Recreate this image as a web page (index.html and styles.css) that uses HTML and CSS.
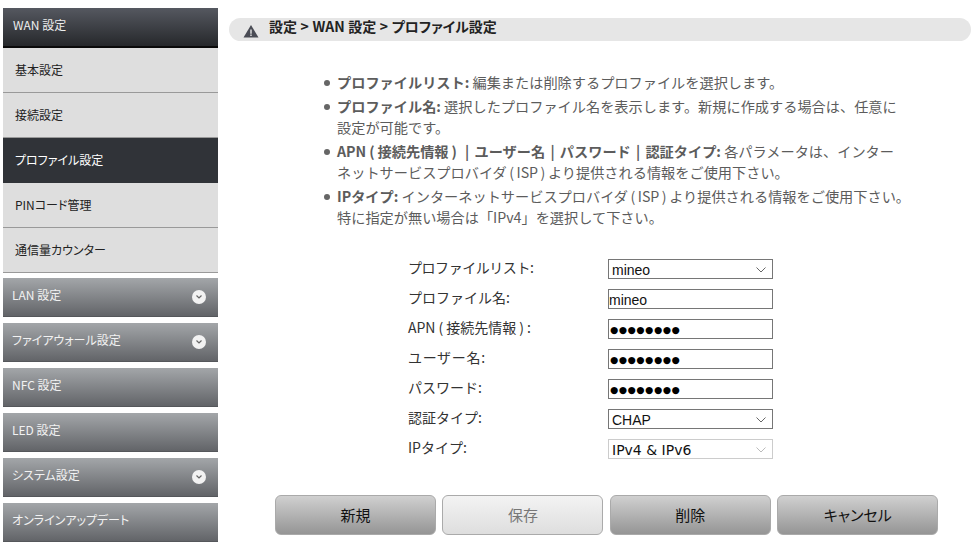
FILE: index.html
```html
<!DOCTYPE html>
<html lang="ja">
<head>
<meta charset="utf-8">
<title>プロファイル設定</title>
<link rel="stylesheet" href="styles.css">
</head>
<body>
<div class="page">
  <nav class="sidebar">
    <div class="group">
      <div class="head head-open">WAN 設定</div>
      <div class="item">基本設定</div>
      <div class="item">接続設定</div>
      <div class="item item-active">プロファイル設定</div>
      <div class="item">PINコード管理</div>
      <div class="item">通信量カウンター</div>
    </div>
    <div class="head">LAN 設定<span class="chev"><svg viewBox="0 0 8 6" width="8" height="6"><path d="M1.5 1.5 4 4l2.5-2.5" fill="none" stroke="#666" stroke-width="1.2"/></svg></span></div>
    <div class="head">ファイアウォール設定<span class="chev"><svg viewBox="0 0 8 6" width="8" height="6"><path d="M1.5 1.5 4 4l2.5-2.5" fill="none" stroke="#666" stroke-width="1.2"/></svg></span></div>
    <div class="head">NFC 設定</div>
    <div class="head">LED 設定</div>
    <div class="head">システム設定<span class="chev"><svg viewBox="0 0 8 6" width="8" height="6"><path d="M1.5 1.5 4 4l2.5-2.5" fill="none" stroke="#666" stroke-width="1.2"/></svg></span></div>
    <div class="head">オンラインアップデート</div>
  </nav>
  <main class="main">
    <div class="crumb">
      <svg class="crumb-icon" viewBox="0 0 16 14" width="16" height="14"><path d="M8 1 15.5 13.5H.5z" fill="#4a4c55"/><path d="M7.3 5.5h1.4v4.2H7.3zM7.3 10.5h1.4v1.5H7.3z" fill="#e6e6e6"/></svg>
      <span>設定 &gt; WAN 設定 &gt; プロファイル設定</span>
    </div>
    <ul class="notes">
      <li><b>プロファイルリスト:</b> 編集または削除するプロファイルを選択します。</li>
      <li><b>プロファイル名:</b> 選択したプロファイル名を表示します。新規に作成する場合は、任意に<br>設定が可能です。</li>
      <li><b class="pipes">APN<span class="paren">(</span>接続先情報<span class="paren">)</span> | ユーザー名 | パスワード | 認証タイプ:</b> 各パラメータは、インター<br>ネットサービスプロバイダ<span class="paren-isp">(</span>ISP<span class="paren-isp">)</span>より提供される情報をご使用下さい。</li>
      <li><b>IPタイプ:</b> インターネットサービスプロバイダ<span class="paren-isp">(</span>ISP<span class="paren-isp">)</span>より提供される情報をご使用下さい。<br>特に指定が無い場合は「IPv4」を選択して下さい。</li>
    </ul>
    <form class="form">
      <div class="row"><label class="label label-tight">プロファイルリスト:</label><div class="field select">mineo<svg viewBox="0 0 10 6" width="10" height="6"><path d="M.5.5 5 5 9.5.5" fill="none" stroke="#666"/></svg></div></div>
      <div class="row"><label class="label">プロファイル名:</label><div class="field text">mineo</div></div>
      <div class="row"><label class="label">APN<span class="paren">(</span>接続先情報<span class="paren">)</span>:</label><div class="field text"><span class="dots">●●●●●●●●</span></div></div>
      <div class="row"><label class="label label-wide">ユーザー名:</label><div class="field text"><span class="dots">●●●●●●●●</span></div></div>
      <div class="row"><label class="label">パスワード:</label><div class="field text"><span class="dots">●●●●●●●●</span></div></div>
      <div class="row"><label class="label">認証タイプ:</label><div class="field select">CHAP<svg viewBox="0 0 10 6" width="10" height="6"><path d="M.5.5 5 5 9.5.5" fill="none" stroke="#666"/></svg></div></div>
      <div class="row"><label class="label">IPタイプ:</label><div class="field select disabled">IPv4 &amp; IPv6<svg viewBox="0 0 10 6" width="10" height="6"><path d="M.5.5 5 5 9.5.5" fill="none" stroke="#bbb"/></svg></div></div>
    </form>
    <div class="buttons">
      <div class="btn">新規</div>
      <div class="btn btn-off">保存</div>
      <div class="btn">削除</div>
      <div class="btn">キャンセル</div>
    </div>
  </main>
</div>
</body>
</html>
```
FILE: styles.css
```css
* { box-sizing: border-box; }
html, body { margin: 0; padding: 0; background: #fff; }
body { font-family: "Noto Sans CJK JP", "Noto Sans", sans-serif; color: #333; overflow: hidden; }
.page { display: flex; width: 980px; height: 555px; padding-left: 3px; }

.sidebar { width: 215px; padding-top: 8px; display: flex; flex-direction: column; gap: 6px; flex: none; font-feature-settings: "palt"; }
.group { display: flex; flex-direction: column; margin-bottom: -1px; }
.head {
  height: 39px; padding: 0 9px 6px; display: flex; align-items: center; justify-content: space-between;
  font-size: 12px; color: #f2f2f2;
  background: linear-gradient(#a3a6a9, #626468); border-bottom: 1px solid #55575b;
}
.head-open { height: 40px; padding-left: 10px; padding-bottom: 5px; background: linear-gradient(#555860, #26282b); border-bottom: 2px solid #0a0a0a; color: #eee; }
.chev {
  width: 14px; height: 14px; border-radius: 50%; background: #f2f2f2; margin: 6px 3px 0 0;
  display: flex; align-items: center; justify-content: center;
}
.item {
  height: 45px; padding: 13px 12px 0; font-size: 12px; line-height: 18px; color: #222;
  background: #dedede; border-bottom: 1px solid #999;
}
.item-active { background: #303338; color: #fff; border-bottom: 0; }

.main { width: 742px; margin-left: 11px; padding-top: 18px; flex: none; }
.crumb {
  height: 23px; border-radius: 12px; background: #e6e6e6; display: flex; align-items: flex-start;
  padding-left: 14px; gap: 10px; font-size: 14px; font-weight: 700; color: #222; line-height: 17px; font-feature-settings: "palt"; word-spacing: .4px;
}
.crumb-icon { margin-top: 6px; }

.notes { margin: 31px 0 0; padding: 0 0 0 108px; list-style: none; font-size: 14.2px; line-height: 21px; color: #5c5c5c; width: 690px; }
.notes li { margin: 0 0 3px; white-space: nowrap; position: relative; }
.notes li::before { content: ""; position: absolute; left: -13px; top: 8px; width: 6px; height: 6px; border-radius: 50%; background: #666; }
.notes b { font-weight: 700; }
.pipes { word-spacing: 2px; }
.paren { margin: 0 3px; }
.paren-isp { margin: 0 2.5px; }

.form { margin-top: 30.5px; display: flex; flex-direction: column; gap: 10px; padding-left: 179px; }
.row { display: flex; height: 20px; align-items: center; }
.label { width: 200px; font-size: 14px; color: #333; line-height: 18px; margin-top: -4px; }
.label-tight { letter-spacing: -0.45px; }
.label-wide { letter-spacing: 0.7px; }
.field { width: 165px; height: 20px; border: 1px solid #767676; padding-top: 2px; font-size: 14px; font-family: "Liberation Sans", "Noto Sans CJK JP", sans-serif; color: #111; display: flex; align-items: center; background: #fff; }
.select { padding-left: 3px; padding-right: 3px; justify-content: space-between; }
.select svg { margin-right: 3px; }
.dots { font-family: "DejaVu Sans", sans-serif; font-size: 9.4px; letter-spacing: .6px; margin-left: 1px; color: #000; }
.disabled { border-color: #ccc; font-family: "DejaVu Sans", sans-serif; font-size: 14px; }

.buttons { display: flex; gap: 6.4px; margin-top: 36px; padding-left: 46px; }
.btn {
  width: 161px; height: 40px; border: 1px solid #aaa; border-radius: 6px; padding-bottom: 1px;
  background: linear-gradient(#d0d0d0, #959595); font-size: 15px; color: #111; font-feature-settings: "palt";
  display: flex; align-items: center; justify-content: center;
}
.btn-off { background: linear-gradient(#f3f3f3, #dedede); color: #777; }
```
